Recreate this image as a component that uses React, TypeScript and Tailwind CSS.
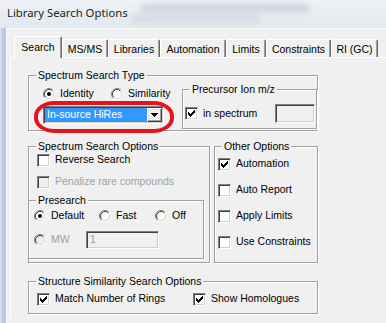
import React from 'react';
import clsx from 'clsx';

const sunken =
  'border border-t-[#808080] border-l-[#808080] border-b-white border-r-white shadow-[inset_1px_1px_0_#404040,inset_-1px_-1px_0_#d4d0c8]';
const raised =
  'border border-t-white border-l-white border-b-[#404040] border-r-[#404040] shadow-[inset_-1px_-1px_0_#a0a0a0,inset_1px_1px_0_#e3e3e3]';

function Check({ checked = false, disabled = false }: { checked?: boolean; disabled?: boolean }) {
  // classic 7x7 check bitmap, one column of 3px per x
  const cols = [2, 3, 4, 3, 2, 1, 0];
  return (
    <span
      className={clsx(
        'flex h-[13px] w-[13px] shrink-0 items-center justify-center',
        sunken,
        disabled ? 'bg-[#f0f0f0]' : 'bg-white'
      )}
    >
      {checked && (
        <svg width="7" height="7" viewBox="0 0 7 7" shapeRendering="crispEdges">
          {cols.map((y, x) => (
            <rect key={x} x={x} y={y} width="1" height="3" fill="#000" />
          ))}
        </svg>
      )}
    </span>
  );
}

function Radio({ checked = false, disabled = false }: { checked?: boolean; disabled?: boolean }) {
  return (
    <svg width="12" height="12" viewBox="0 0 12 12" className="shrink-0">
      <circle cx="6" cy="6" r="4.5" fill={disabled ? '#f0f0f0' : '#fff'} />
      <path d="M2.11 9.89 A5.5 5.5 0 0 1 9.89 2.11" stroke="#808080" fill="none" />
      <path d="M9.89 2.11 A5.5 5.5 0 0 1 2.11 9.89" stroke="#fff" fill="none" />
      <path d="M2.82 9.18 A4.5 4.5 0 0 1 9.18 2.82" stroke="#404040" fill="none" />
      <path d="M9.18 2.82 A4.5 4.5 0 0 1 2.82 9.18" stroke="#d4d0c8" fill="none" />
      {checked && <circle cx="6" cy="6" r="2" fill="#000" />}
    </svg>
  );
}

function GroupBox({
  label,
  className,
  children,
}: {
  label: string;
  className?: string;
  children?: React.ReactNode;
}) {
  return (
    <div
      className={clsx(
        'relative border border-[#a0a0a0] shadow-[inset_1px_1px_0_#fff,1px_1px_0_#fff]',
        className
      )}
    >
      <span className="absolute left-[7px] top-[-7px] bg-[#f0f0f0] px-[2px] leading-[13px] whitespace-nowrap">
        {label}
      </span>
      {children}
    </div>
  );
}

function CheckRow({
  label,
  checked,
  disabled,
  className,
}: {
  label: string;
  checked?: boolean;
  disabled?: boolean;
  className?: string;
}) {
  return (
    <div className={clsx('flex items-center', className)}>
      <Check checked={checked} disabled={disabled} />
      <span className={clsx('ml-[5px] whitespace-nowrap', disabled && 'text-[#a0a0a0]')}>{label}</span>
    </div>
  );
}

function RadioRow({
  label,
  checked,
  disabled,
  className,
}: {
  label: string;
  checked?: boolean;
  disabled?: boolean;
  className?: string;
}) {
  return (
    <div className={clsx('flex items-center', className)}>
      <Radio checked={checked} disabled={disabled} />
      <span className={clsx('ml-[5px] whitespace-nowrap', disabled && 'text-[#a0a0a0]')}>{label}</span>
    </div>
  );
}

const tabs = [
  { name: 'Search', w: 'w-[48px]' },
  { name: 'MS/MS', w: 'w-[46px]' },
  { name: 'Libraries', w: 'w-[52px]' },
  { name: 'Automation', w: 'w-[66px]' },
  { name: 'Limits', w: 'w-[40px]' },
  { name: 'Constraints', w: 'w-[65px]' },
  { name: 'RI (GC)', w: 'w-[47px]' },
];

export default function App() {
  return (
    <div className="relative h-[323px] w-[386px] overflow-hidden bg-[#e4eaf1] font-['Liberation_Sans',Arial,sans-serif] text-[10.5px] text-black">
      {/* title bar */}
      <div className="relative flex h-[28px] items-center bg-gradient-to-b from-[#eef2f6] to-[#e2e8ef] pb-[1px] pl-[7px]">
        <div className="absolute left-[140px] top-[4px] h-[8px] w-[170px] rounded-full bg-[#b8c2ce] opacity-60 blur-[3px]" />
        <div className="absolute left-[130px] top-[15px] h-[7px] w-[130px] rounded-full bg-[#c2cbd5] opacity-60 blur-[3px]" />
        <span className="relative font-['Noto_Sans',sans-serif] text-[11.3px] text-[#1e1e1e]">
          Library Search Options
        </span>
      </div>

      <div className="flex h-[295px]">
        {/* left window frame */}
        <div className="w-[6px] border-l border-[#dbe4ee] bg-gradient-to-r from-[#c6d4e4] to-[#b3c6dc]" />

        {/* client area */}
        <div className="flex-1 border-l border-t border-[#f7f9fb] bg-[#f0f0f0] pl-[3px] pt-[7px]">
          {/* tab row */}
          <div className="flex h-[21px] items-end pl-[4px]">
            {tabs.map((t, i) =>
              i === 0 ? (
                <div
                  key={t.name}
                  className={clsx(
                    'relative z-10 mb-[-1px] flex h-[22px] items-start justify-center rounded-t-[2px] border-l border-r border-t border-l-white border-r-[#696969] border-t-white bg-[#f0f0f0] pt-[3px] shadow-[inset_-1px_0_0_#a0a0a0]',
                    t.w
                  )}
                >
                  {t.name}
                </div>
              ) : (
                <div
                  key={t.name}
                  className={clsx(
                    'flex h-[18px] items-start justify-center rounded-t-[2px] border-l border-r border-t border-l-white border-r-[#696969] border-t-white pt-[2px] shadow-[inset_-1px_0_0_#a0a0a0]',
                    t.w
                  )}
                >
                  {t.name}
                </div>
              )
            )}
          </div>

          {/* tab page */}
          <div className="h-[260px] border-l border-t border-white pl-[17px] pt-[17px]">
            {/* Spectrum Search Type */}
            <GroupBox label="Spectrum Search Type" className="flex h-[56px] w-[290px]">
              <div className="flex w-[153px] flex-col pl-[14px] pt-[11px]">
                <div className="flex h-[13px] items-center">
                  <RadioRow label="Identity" checked className="w-[68px]" />
                  <RadioRow label="Similarity" />
                </div>
                <div className={clsx('mt-[6px] flex h-[18px] w-[121px] bg-white p-[1px]', sunken)}>
                  <div className="flex flex-1 items-center bg-[#3399ff] pl-[2px] text-white">
                    In-source HiRes
                  </div>
                  <div className={clsx('flex w-[15px] items-center justify-center bg-[#f0f0f0]', raised)}>
                    <svg width="7" height="4" viewBox="0 0 7 4" shapeRendering="crispEdges">
                      <rect x="0" y="0" width="7" height="1" fill="#000" />
                      <rect x="1" y="1" width="5" height="1" fill="#000" />
                      <rect x="2" y="2" width="3" height="1" fill="#000" />
                      <rect x="3" y="3" width="1" height="1" fill="#000" />
                    </svg>
                  </div>
                </div>
              </div>

              <GroupBox label="Precursor Ion m/z" className="mt-[13px] h-[40px] flex-1">
                <div className="mt-[14px] flex h-[19px] items-center pl-[2px] pr-[1px]">
                  <CheckRow label="in spectrum" checked />
                  <div className={clsx('ml-auto h-[19px] w-[40px] bg-[#f0f0f0]', sunken)} />
                </div>
              </GroupBox>

              {/* red highlight drawn over the combo */}
              <div className="pointer-events-none absolute left-[5px] top-[25px] h-[32px] w-[140px] rounded-[20px/15px] border-[4px] border-[#e5131d]" />
            </GroupBox>

            <div className="mt-[15px] flex gap-[4px]">
              {/* Spectrum Search Options */}
              <GroupBox label="Spectrum Search Options" className="h-[117px] w-[182px]">
                <div className="pl-[8px] pt-[2px]">
                  <CheckRow label="Reverse Search" className="h-[22px]" />
                  <CheckRow label="Penalize rare compounds" disabled className="h-[22px]" />
                </div>
                <GroupBox label="Presearch" className="ml-[-1px] mt-[7px] h-[59px] w-[176px]">
                  <div className="pl-[5px] pt-[5px]">
                    <div className="flex h-[20px] items-center">
                      <RadioRow label="Default" checked className="w-[65px]" />
                      <RadioRow label="Fast" className="w-[56px]" />
                      <RadioRow label="Off" />
                    </div>
                    <div className="mt-[4px] flex h-[20px] items-center">
                      <RadioRow label="MW" disabled className="w-[52px]" />
                      <div className={clsx('flex h-[18px] w-[73px] items-center bg-[#f0f0f0] pl-[3px] text-[#a0a0a0]', sunken)}>
                        1
                      </div>
                    </div>
                  </div>
                </GroupBox>
              </GroupBox>

              {/* Other Options */}
              <GroupBox label="Other Options" className="h-[117px] w-[104px]">
                <div className="pl-[3px] pt-[4px]">
                  <CheckRow label="Automation" checked className="h-[26px]" />
                  <CheckRow label="Auto Report" className="h-[26px]" />
                  <CheckRow label="Apply Limits" className="h-[26px]" />
                  <CheckRow label="Use Constraints" className="h-[26px]" />
                </div>
              </GroupBox>
            </div>

            {/* Structure Similarity Search Options */}
            <GroupBox label="Structure Similarity Search Options" className="mt-[18px] h-[33px] w-[290px]">
              <div className="flex h-[20px] items-center pl-[8px] mt-[7px]">
                <CheckRow label="Match Number of Rings" checked className="w-[156px]" />
                <CheckRow label="Show Homologues" checked />
              </div>
            </GroupBox>
          </div>
        </div>
      </div>
    </div>
  );
}
